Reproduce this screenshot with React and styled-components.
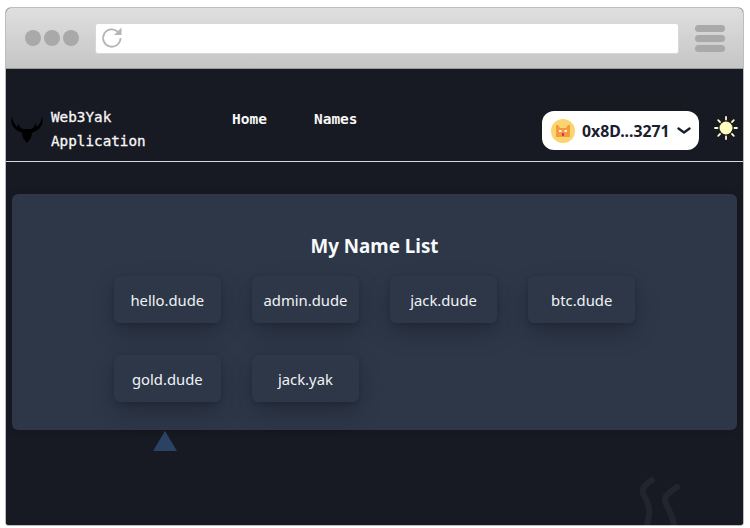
import React from "react";
import styled, { createGlobalStyle } from "styled-components";

const Global = createGlobalStyle`
  html, body { margin: 0; padding: 0; background: #fff; }
  body { font-family: "Noto Sans", "Open Sans", sans-serif; }
  * { box-sizing: border-box; }
`;

const Page = styled.div`
  width: 750px;
  height: 528px;
  padding: 8px 7px 3px 6px;
  overflow: hidden;
`;

const Frame = styled.div`
  width: 737px;
  height: 517px;
  display: flex;
  flex-direction: column;
  border-radius: 5px 5px 3px 3px;
  overflow: hidden;
  box-shadow: 0 0 0 1px #bdbdbd;
  background: #171923;
`;

const Chrome = styled.div`
  height: 61px;
  flex: none;
  display: flex;
  align-items: center;
  padding: 0 18px 0 19px;
  background: linear-gradient(#dfdfdf, #c5c5c5);
  border-bottom: 1px solid #9a9a9a;
`;

const Dots = styled.div`
  display: flex;
  gap: 3px;
  margin-right: 17px;
`;

const Dot = styled.span`
  width: 16px;
  height: 16px;
  border-radius: 50%;
  background: #a9a9a9;
`;

const UrlBar = styled.div`
  flex: 1;
  height: 31px;
  margin: 0 -1px;
  background: #fff;
  border-radius: 3px;
  border: 1px solid #d8d8d8;
  display: flex;
  align-items: center;
  padding-left: 5px;
`;

const Burger = styled.div`
  width: 30px;
  margin-left: 17px;
  display: flex;
  flex-direction: column;
  gap: 3px;
`;

const BurgerBar = styled.span`
  height: 7px;
  border-radius: 4px;
  background: #a9a9a9;
`;

const Viewport = styled.div`
  flex: 1;
  position: relative;
  padding-top: 35px;
  background: #171923;
`;

const Nav = styled.nav`
  height: 58px;
  display: flex;
  align-items: flex-start;
  border-bottom: 1px solid #d5d8dc;
  padding-left: 4px;
`;

const LogoWrap = styled.div`
  width: 34px;
  margin-top: 12px;
  display: flex;
`;

const Brand = styled.div`
  width: 181px;
  margin-left: 7px;
  font-family: "DejaVu Sans Mono", monospace;
  font-size: 14.3px;
  font-weight: 400;
  -webkit-text-stroke: 0.3px #f7f7f7;
  line-height: 23.5px;
  color: #f7f7f7;
  padding-top: 2px;
`;

const NavLinks = styled.div`
  display: flex;
  gap: 47px;
  padding-top: 3px;
  width: 310px;
`;

const NavLink = styled.a`
  font-family: "DejaVu Sans Mono", monospace;
  font-size: 14.5px;
  font-weight: 700;
  line-height: 24px;
  color: #f7f7f7;
`;

const Wallet = styled.button`
  width: 157px;
  height: 39px;
  margin-top: 7px;
  border: 0;
  border-radius: 12px;
  background: #fff;
  display: flex;
  align-items: center;
  padding: 0 0 0 9px;
  font-family: "Noto Sans", sans-serif;
  font-weight: 700;
  font-size: 15.8px;
  color: #1a202c;
`;

const Avatar = styled.span`
  width: 24px;
  height: 24px;
  border-radius: 50%;
  background: #fbd46d;
  display: flex;
  align-items: center;
  justify-content: center;
  margin-right: 7px;
`;

const ChevronIcon = styled.svg`
  margin-left: 7px;
`;

const SunWrap = styled.span`
  margin-left: 15px;
  margin-top: 12px;
  display: flex;
`;

const Main = styled.main`
  margin: 32px 6px 0 6px;
  height: 236px;
  border-radius: 6px;
  background: #2d3748;
  box-shadow: 0 0 10px rgba(0, 0, 0, 0.12);
  padding-top: 38px;
  display: flex;
  flex-direction: column;
  align-items: center;
`;

const Title = styled.h2`
  margin: 0;
  font-size: 18.8px;
  line-height: 28px;
  font-weight: 700;
  color: #f7fafc;
`;

const Names = styled.div`
  width: 521px;
  margin-top: 16px;
  display: grid;
  grid-template-columns: repeat(4, 1fr);
  column-gap: 31.6px;
  row-gap: 32px;
`;

const NameCard = styled.div`
  height: 47px;
  border-radius: 6px;
  background: #2d3748;
  box-shadow: 0 10px 24px rgba(0, 0, 0, 0.2), 0 2px 5px rgba(0, 0, 0, 0.14);
  display: flex;
  align-items: center;
  justify-content: center;
  font-size: 14.8px;
  color: #f0f3f6;
`;

const Triangle = styled.svg`
  position: absolute;
  left: 147px;
  top: 362px;
`;

const Steam = styled.svg`
  position: absolute;
  right: 59px;
  bottom: 0;
`;

const Logo = () => (
  <svg width="34" height="28" viewBox="0 0 34 28">
    <path
      d="M2 1C0 7 3 12 8 15l4 2 1 5 4 5 4-5 1-5 4-2c5-3 8-8 6-14-1 5-3 8-5 10l-2-4c.5 3-1 5-4 6h-8c-3-1-4.500-3-4-6l-2 4C5 9 3 6 2 1z"
      fill="#000"
    />
  </svg>
);

const Reload = () => (
  <svg width="24" height="24" viewBox="0 0 24 24" fill="none">
    <path d="M19.500 12a8.700 8.700 0 1 1-2.600-6.200" stroke="#b5b5b5" strokeWidth="1.800" />
    <path d="M20.500 1.500v7.500H13z" fill="#b5b5b5" />
  </svg>
);

const Cat = () => (
  <svg width="16" height="16" viewBox="0 0 16 16">
    <path d="M1 2h2l2 3h6l2-3h2v12H1z" fill="#f59a3c" />
    <rect x="4" y="7" width="2.500" height="2" fill="#fff3d6" />
    <rect x="9.500" y="7" width="2.500" height="2" fill="#fff3d6" />
    <rect x="7" y="10" width="2" height="3" fill="#d6336c" />
  </svg>
);

const Chevron = () => (
  <ChevronIcon width="14" height="8" viewBox="0 0 14 8">
    <path d="M1.500 1.500 7 5.500l5.500-4" fill="none" stroke="#1a202c" strokeWidth="2.400" strokeLinecap="round" strokeLinejoin="round" />
  </ChevronIcon>
);

const Sun = () => (
  <svg width="24" height="24" viewBox="0 0 24 24">
    <circle cx="12" cy="12" r="6.500" fill="#fefcbf" />
    <g stroke="#fefcbf" strokeWidth="1.800" strokeLinecap="round">
      <path d="M12 1v2.500M12 20.500V23M1 12h2.500M20.500 12H23M4.200 4.200 6 6M18 18l1.800 1.800M4.200 19.800 6 18M18 6l1.800-1.800" />
    </g>
  </svg>
);

const names = ["hello.dude", "admin.dude", "jack.dude", "btc.dude", "gold.dude", "jack.yak"];

export default function App() {
  return (
    <>
      <Global />
      <Page>
        <Frame>
          <Chrome>
            <Dots>
              <Dot />
              <Dot />
              <Dot />
            </Dots>
            <UrlBar>
              <Reload />
            </UrlBar>
            <Burger>
              <BurgerBar />
              <BurgerBar />
              <BurgerBar />
            </Burger>
          </Chrome>
          <Viewport>
            <Nav>
              <LogoWrap>
                <Logo />
              </LogoWrap>
              <Brand>
                Web3Yak
                <br />
                Application
              </Brand>
              <NavLinks>
                <NavLink>Home</NavLink>
                <NavLink>Names</NavLink>
              </NavLinks>
              <Wallet>
                <Avatar>
                  <Cat />
                </Avatar>
                0x8D...3271
                <Chevron />
              </Wallet>
              <SunWrap>
                <Sun />
              </SunWrap>
            </Nav>
            <Main>
              <Title>My Name List</Title>
              <Names>
                {names.map((n) => (
                  <NameCard key={n}>{n}</NameCard>
                ))}
              </Names>
            </Main>
            <Triangle width="24" height="20" viewBox="0 0 24 20">
              <path d="M12 0 24 20H0z" fill="#2a4365" />
            </Triangle>
            <Steam width="44" height="48" viewBox="0 0 44 48" fill="none">
              <path d="M12 3C5 8 1 12 3 16c2 6 8 12 6 22l-2 10M37 10C30 15 24 19 25 23c1 7 8 15 9 25" stroke="#22252e" strokeWidth="6" strokeLinecap="round" />
            </Steam>
          </Viewport>
        </Frame>
      </Page>
    </>
  );
}
